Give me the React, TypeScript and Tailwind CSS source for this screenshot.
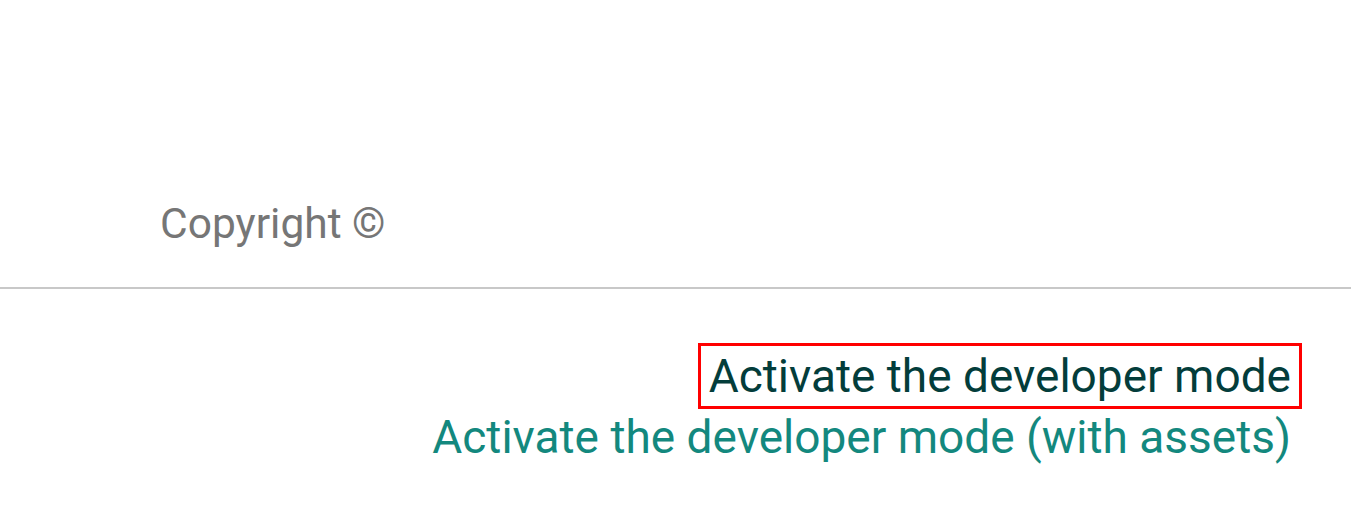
export default function App() {
  return (
    <div className="w-[1351px] h-[514px] bg-white overflow-hidden font-['Roboto',sans-serif]">
      <div className="h-[287px] pl-[160px] pt-[198px]">
        <p className="text-[42.5px] leading-[52px] text-[#767676]">Copyright ©</p>
      </div>
      <div className="h-[2px] bg-[#c8c8c8]" />
      <div className="flex flex-col items-end pr-[49px] pt-[54px]">
        <a className="border-[3px] border-[#ff0000] px-[8px] text-[46px] leading-[60px] text-[#033d3b]">
          Activate the developer mode
        </a>
        <a className="pr-[11px] text-[46px] leading-[56px] text-[#13887e]">
          Activate the developer mode (with assets)
        </a>
      </div>
    </div>
  );
}
